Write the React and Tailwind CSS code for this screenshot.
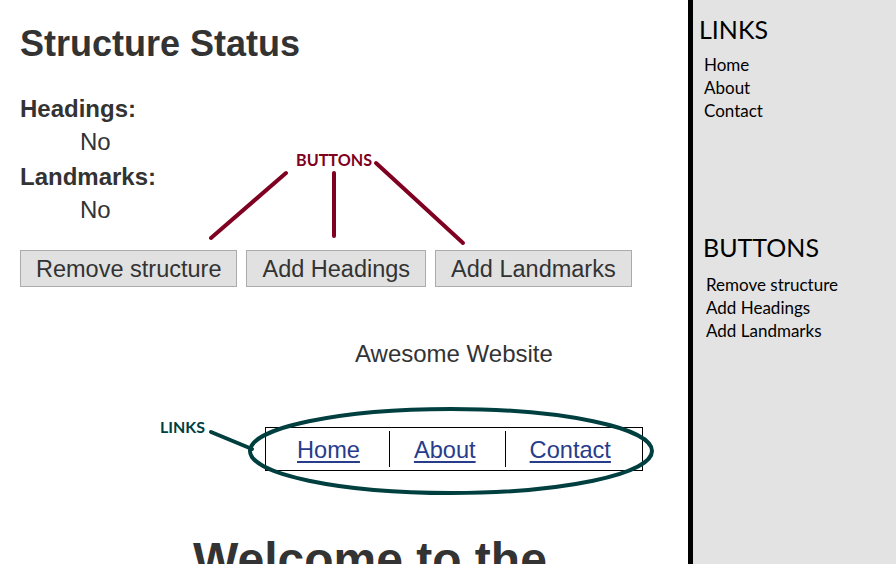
const SANS = { fontFamily: '"Liberation Sans", Arial, sans-serif' }

const STATUS = [
  { label: 'Headings:', value: 'No' },
  { label: 'Landmarks:', value: 'No' },
]

const BUTTONS = ['Remove structure', 'Add Headings', 'Add Landmarks']
const LINKS = ['Home', 'About', 'Contact']

const Annotations = () => (
  <svg className="absolute left-0 top-0 pointer-events-none" width="688" height="564" viewBox="0 0 688 564">
    <g stroke="#7f0020" strokeWidth="4" strokeLinecap="round" fill="none">
      <line x1="286" y1="173" x2="211" y2="238" />
      <line x1="334" y1="173" x2="334" y2="236" />
      <line x1="376" y1="163" x2="463" y2="243" />
    </g>
    <text x="296" y="166" fill="#7f0020" fontFamily="Lato, sans-serif" fontWeight="700" fontSize="17" textLength="76" lengthAdjust="spacingAndGlyphs">BUTTONS</text>
    <g stroke="#003f3f" strokeWidth="4" strokeLinecap="round" fill="none">
      <ellipse cx="451" cy="451" rx="201" ry="42" />
      <line x1="211" y1="432" x2="252" y2="449" />
    </g>
    <text x="160" y="433" fill="#003f3f" fontFamily="Lato, sans-serif" fontWeight="700" fontSize="15" textLength="45" lengthAdjust="spacingAndGlyphs">LINKS</text>
  </svg>
)

const Sidebar = () => (
  <aside className="flex-1 h-full bg-[#e3e3e3] border-l-[5px] border-black text-black" style={{ fontFamily: 'Lato, "Open Sans", sans-serif' }}>
    <h2 className="mt-[14px] ml-[6px] text-[25px] leading-[30px]">LINKS</h2>
    <ul className="mt-[9px] ml-[11px] text-[17px] leading-[23px]">
      {LINKS.map((link) => (
        <li key={link}>{link}</li>
      ))}
    </ul>
    <h2 className="mt-[110px] ml-[10px] text-[25px] leading-[30px]">BUTTONS</h2>
    <ul className="mt-[11px] ml-[13px] text-[17px] leading-[23px]">
      {BUTTONS.map((label) => (
        <li key={label}>{label}</li>
      ))}
    </ul>
  </aside>
)

const App = () => {
  return (
    <div className="relative flex w-[896px] h-[564px] overflow-hidden bg-white">
      <main className="w-[688px] shrink-0 pl-[20px] text-[#333333]" style={SANS}>
        <h1 className="mt-[24px] text-[36px] leading-[40px] font-bold">Structure Status</h1>

        <dl className="mt-[28px]">
          {STATUS.map((item, i) => (
            <div key={item.label} className={i > 0 ? 'mt-[2px]' : ''}>
              <dt className="text-[24px] leading-[33px] font-bold">{item.label}</dt>
              <dd className="pl-[60px] text-[24px] leading-[33px]">{item.value}</dd>
            </div>
          ))}
        </dl>

        <div className="mt-[24px] flex gap-[9px]">
          {BUTTONS.map((label) => (
            <button
              key={label}
              className="h-[37px] px-[15px] pt-[2px] bg-[#e1e1e1] border border-[#ababab] text-[23.5px] leading-none text-[#333333]"
              style={SANS}
            >
              {label}
            </button>
          ))}
        </div>

        <p className="mt-[53px] ml-[335px] text-[24px] leading-[28px]">Awesome Website</p>

        <nav className="mt-[59px] ml-[245px] w-fit flex py-[3px] pl-[7px] pr-[2px] border border-black">
          {LINKS.map((link, i) => (
            <div key={link} className={`h-[36px] pl-[24px] pr-[29px] pt-[3px] flex items-center ${i > 0 ? 'border-l border-black' : ''}`}>
              <a href="#" className="text-[23.6px] leading-none text-[#283c8c] underline underline-offset-[3px]">{link}</a>
            </div>
          ))}
        </nav>

        <h2 className="mt-[61px] ml-[173px] text-[48px] leading-[56px] font-bold whitespace-nowrap">Welcome to the</h2>
      </main>

      <Sidebar />
      <Annotations />
    </div>
  )
}

export default App
